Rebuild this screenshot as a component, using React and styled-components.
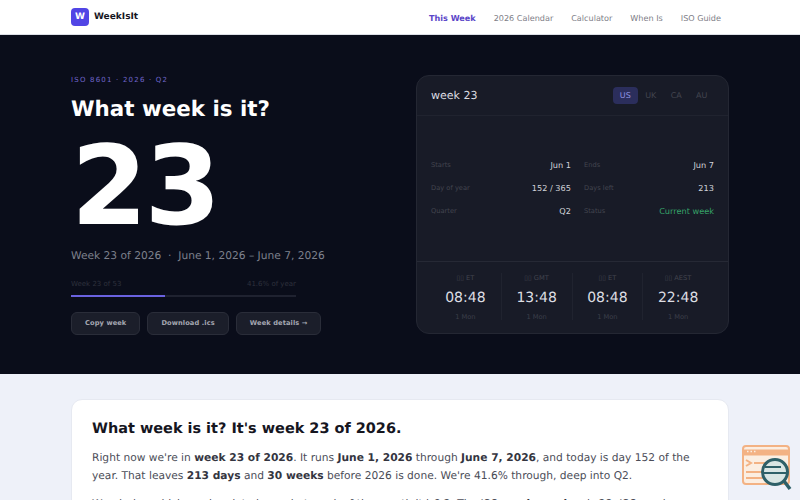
import React from "react";
import styled, { createGlobalStyle } from "styled-components";

const Global = createGlobalStyle`
  html, body { margin: 0; padding: 0; height: 500px; overflow: hidden; background: #eef1f9; }
  body { font-family: "DejaVu Sans", sans-serif; text-rendering: geometricPrecision; }
  * { box-sizing: border-box; }
`;

const Nav = styled.header`
  height: 35px;
  background: #fff;
  border-bottom: 1px solid #dcdfe6;
  padding: 0 71px;
  display: flex;
  align-items: center;
  justify-content: space-between;
`;
const Brand = styled.div`
  display: flex;
  align-items: center;
  gap: 5px;
  font-size: 9px;
  font-weight: 700;
  color: #17171f;
`;
const LogoMark = styled.div`
  width: 18px;
  height: 18px;
  border-radius: 4px;
  background: #5145e5;
  color: #fff;
  font-size: 9px;
  font-weight: 700;
  display: flex;
  align-items: center;
  justify-content: center;
`;
const Links = styled.nav`
  display: flex;
  gap: 18px;
  padding-right: 8px;
  padding-top: 1px;
`;
const NavLink = styled.a`
  font-size: 8.1px;
  font-weight: ${(p) => (p.$active ? 700 : 400)};
  color: ${(p) => (p.$active ? "#5b46c8" : "#808088")};
`;

const Hero = styled.section`
  height: 339px;
  background: #0a0d1a;
  padding: 40px 71px 0;
  display: grid;
  grid-template-columns: 225px 313px;
  justify-content: space-between;
`;
const Left = styled.div`
  display: flex;
  flex-direction: column;
  align-items: flex-start;
  min-width: 0;
`;
const Eyebrow = styled.div`
  font-size: 7px;
  line-height: 10px;
  letter-spacing: 1.2px;
  color: #7066cc;
  margin-bottom: 10px;
`;
const HeroTitle = styled.h1`
  margin: 0;
  font-size: 21.4px;
  line-height: 30px;
  font-weight: 700;
  color: #fff;
  white-space: nowrap;
`;
const BigNumber = styled.div`
  font-size: 110px;
  line-height: 116px;
  margin-top: 3px;
  font-weight: 700;
  letter-spacing: -3px;
  color: #fff;
`;
const DateLine = styled.div`
  margin-top: 3px;
  font-size: 10.66px;
  line-height: 18px;
  color: #7d808c;
  white-space: nowrap;
`;
const ProgressLabels = styled.div`
  width: 225px;
  margin-top: 14px;
  display: flex;
  justify-content: space-between;
  font-size: 7px;
  line-height: 10px;
  color: #2e313d;
`;
const Track = styled.div`
  width: 225px;
  height: 2px;
  margin-top: 6px;
  background: #1f2230;
`;
const Fill = styled.div`
  height: 100%;
  background: #6a62e0;
`;
const Actions = styled.div`
  margin-top: 15px;
  display: flex;
  gap: 7px;
`;
const Button = styled.button`
  height: 22.5px;
  padding: 0 13px;
  border-radius: 6px;
  border: 1px solid #2a2d39;
  background: #1b1e2a;
  color: #a5a7b2;
  font-family: inherit;
  font-size: 6.67px;
  font-weight: 700;
  letter-spacing: 0.1px;
  white-space: nowrap;
  text-rendering: inherit;
`;

const Card = styled.div`
  height: 259px;
  border-radius: 13px;
  border: 1px solid #242733;
  background: #181b27;
  display: flex;
  flex-direction: column;
`;
const CardHead = styled.div`
  height: 40px;
  border-bottom: 1px solid #20232f;
  padding: 0 14px;
  display: flex;
  align-items: center;
  justify-content: space-between;
`;
const CardTitle = styled.div`
  font-size: 11px;
  color: #dcdde2;
`;
const Tabs = styled.div`
  display: flex;
  gap: 1px;
`;
const Tab = styled.div`
  width: 24.5px;
  height: 17px;
  border-radius: 4px;
  font-size: 8px;
  display: flex;
  align-items: center;
  justify-content: center;
  background: ${(p) => (p.$active ? "#2b2e5c" : "transparent")};
  color: ${(p) => (p.$active ? "#8f93e0" : "#43454f")};
`;
const Stats = styled.div`
  flex: 1;
  display: grid;
  grid-template-columns: 140px 130px;
  column-gap: 13px;
  row-gap: 7px;
  padding: 0 14px 2px;
  align-content: center;
`;
const Stat = styled.div`
  height: 16px;
  display: flex;
  align-items: center;
  justify-content: space-between;
`;
const StatLabel = styled.span`
  font-size: 6.7px;
  color: #43454f;
`;
const StatValue = styled.span`
  font-size: 8.2px;
  color: ${(p) => (p.$green ? "#36a269" : "#d0d2d8")};
`;
const Clocks = styled.div`
  height: 72px;
  border-top: 1px solid #262935;
  display: grid;
  grid-template-columns: repeat(4, 1fr);
  padding: 11px 15px 0 13px;
`;
const Clock = styled.div`
  height: 47px;
  display: flex;
  flex-direction: column;
  align-items: center;
  border-left: ${(p) => (p.$first ? "none" : "1px solid #20232f")};
`;
const ClockZone = styled.div`
  font-size: 6.7px;
  line-height: 10px;
  color: #43454f;
`;
const ClockTime = styled.div`
  font-size: 14px;
  line-height: 18px;
  margin-top: 6px;
  color: #dcdde2;
`;
const ClockDay = styled.div`
  font-size: 6.7px;
  line-height: 10px;
  margin-top: 5px;
  color: #3c3f4a;
`;

const Main = styled.main`
  position: relative;
  height: 126px;
  padding: 25px 71px 0;
  overflow: hidden;
`;
const Article = styled.article`
  height: 200px;
  background: #fff;
  border: 1px solid #e6e9f1;
  border-radius: 11px;
  padding: 18px 20px;
`;
const ArticleTitle = styled.h2`
  margin: 0 0 9px;
  font-size: 14.46px;
  line-height: 22px;
  font-weight: 700;
  color: #16161f;
`;
const Para = styled.p`
  margin: 0 0 10px;
  font-size: 10.66px;
  line-height: 18px;
  color: #4b4d58;
  strong { color: #34353f; font-weight: 700; }
`;
const Badge = styled.svg`
  position: absolute;
  left: 742px;
  top: 71px;
`;

function SearchBadge() {
  return (
    <Badge width="50" height="46" viewBox="0 0 50 46" fill="none">
      <rect x="1" y="1" width="46" height="38" rx="3" fill="#fbeee2" stroke="#f3b284" strokeWidth="2" />
      <path d="M1 7.5h46" stroke="#f3b284" strokeWidth="6" />
      <path d="M5 6.5h1.5M8.5 6.5h1.5M12 6.5h1.5" stroke="#fbeee2" strokeWidth="1.5" />
      <path d="M4 15l5 3-5 3M12 18h12M4 27h20M4 33h20" stroke="#f3b284" strokeWidth="2" />
      <circle cx="33" cy="27" r="12.5" fill="#d9e6e4" stroke="#2e6068" strokeWidth="3" />
      <path d="M23 22h16M21 28h24" stroke="#2e6068" strokeWidth="2" />
      <path d="M42 36l6 8" stroke="#2e6068" strokeWidth="3.5" />
    </Badge>
  );
}

const stats = [
  ["Starts", "Jun 1"],
  ["Ends", "Jun 7"],
  ["Day of year", "152 / 365"],
  ["Days left", "213"],
  ["Quarter", "Q2"],
  ["Status", "Current week", true],
];

const clocks = [
  ["▯▯ ET", "08:48"],
  ["▯▯ GMT", "13:48"],
  ["▯▯ ET", "08:48"],
  ["▯▯ AEST", "22:48"],
];

export default function App() {
  return (
    <>
      <Global />
      <Nav>
        <Brand>
          <LogoMark>W</LogoMark>
          WeekIsIt
        </Brand>
        <Links>
          <NavLink $active>This Week</NavLink>
          <NavLink>2026 Calendar</NavLink>
          <NavLink>Calculator</NavLink>
          <NavLink>When Is</NavLink>
          <NavLink>ISO Guide</NavLink>
        </Links>
      </Nav>
      <Hero>
        <Left>
          <Eyebrow>ISO 8601 · 2026 · Q2</Eyebrow>
          <HeroTitle>What week is it?</HeroTitle>
          <BigNumber>23</BigNumber>
          <DateLine>Week 23 of 2026 &nbsp;·&nbsp; June 1, 2026 – June 7, 2026</DateLine>
          <ProgressLabels>
            <span>Week 23 of 53</span>
            <span>41.6% of year</span>
          </ProgressLabels>
          <Track>
            <Fill style={{ width: "41.6%" }} />
          </Track>
          <Actions>
            <Button>Copy week</Button>
            <Button>Download .ics</Button>
            <Button>Week details →</Button>
          </Actions>
        </Left>
        <Card>
          <CardHead>
            <CardTitle>week 23</CardTitle>
            <Tabs>
              <Tab $active>US</Tab>
              <Tab>UK</Tab>
              <Tab>CA</Tab>
              <Tab>AU</Tab>
            </Tabs>
          </CardHead>
          <Stats>
            {stats.map(([label, value, green]) => (
              <Stat key={label}>
                <StatLabel>{label}</StatLabel>
                <StatValue $green={green}>{value}</StatValue>
              </Stat>
            ))}
          </Stats>
          <Clocks>
            {clocks.map(([zone, time], i) => (
              <Clock key={zone + time} $first={i === 0}>
                <ClockZone>{zone}</ClockZone>
                <ClockTime>{time}</ClockTime>
                <ClockDay>1 Mon</ClockDay>
              </Clock>
            ))}
          </Clocks>
        </Card>
      </Hero>
      <Main>
        <Article>
          <ArticleTitle>What week is it? It's week 23 of 2026.</ArticleTitle>
          <Para>
            Right now we're in <strong>week 23 of 2026</strong>. It runs <strong>June 1, 2026</strong> through{" "}
            <strong>June 7, 2026</strong>, and today is day 152 of the year. That leaves <strong>213 days</strong> and{" "}
            <strong>30 weeks</strong> before 2026 is done. We're 41.6% through, deep into Q2.
          </Para>
          <Para>
            Wondering which week a date is or what week of the month it is? 2. The ISO <strong>week number</strong> is 23, ISO week
          </Para>
        </Article>
        <SearchBadge />
      </Main>
    </>
  );
}
